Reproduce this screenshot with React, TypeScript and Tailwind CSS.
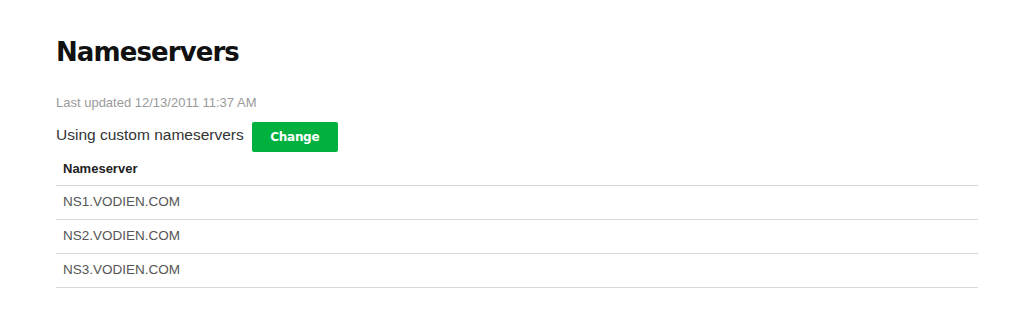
const servers = ["NS1.VODIEN.COM", "NS2.VODIEN.COM", "NS3.VODIEN.COM"];

const App = () => {
	return (
		<div className="w-[1024px] h-[332px] bg-white pl-[56px] pr-[46px] pt-[36px] font-['Liberation_Sans',Arial,sans-serif]">
			<h1 className="text-[26px] leading-[32px] font-bold tracking-[-0.9px] text-[#111] font-['DejaVu_Sans',sans-serif]">
				Nameservers
			</h1>
			<p className="mt-[27px] text-[13px] leading-[16px] text-[#9a9a9a]">Last updated 12/13/2011 11:37 AM</p>
			<div className="mt-[11px] flex items-center gap-[8px]">
				<span className="text-[15.5px] text-[#333] -mt-[4px]">Using custom nameservers</span>
				<button className="w-[86px] h-[30px] rounded-[2px] bg-[#00b140] text-white text-[12px] font-bold font-['DejaVu_Sans',sans-serif] tracking-[-0.3px]">
					Change
				</button>
			</div>
			<table className="w-full border-collapse">
				<thead>
					<tr className="border-b border-[#d6d6d6]">
						<th className="h-[33px] px-[7px] text-left text-[13px] font-bold text-[#222]">Nameserver</th>
					</tr>
				</thead>
				<tbody>
					{servers.map((s) => (
						<tr key={s} className="border-b border-[#d6d6d6]">
							<td className="h-[34px] px-[7px] text-[13.5px] text-[#555]">{s}</td>
						</tr>
					))}
				</tbody>
			</table>
		</div>
	);
};

export default App;
